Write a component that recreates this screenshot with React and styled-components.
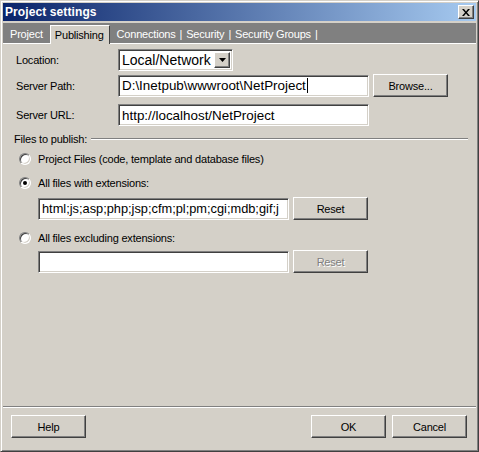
import React from "react";
import styled, { createGlobalStyle, css } from "styled-components";

const Global = createGlobalStyle`
  html, body { margin: 0; padding: 0; background: #d4d0c8; }
  body { font-family: "Liberation Sans", Arial, sans-serif; font-size: 11px; letter-spacing: -0.2px; color: #000; }
  * { box-sizing: border-box; }
`;

const raised = css`
  border: 1px solid;
  border-color: #ffffff #404040 #404040 #ffffff;
  box-shadow: inset -1px -1px #808080, inset 1px 1px #d4d0c8;
`;

const sunken = css`
  border: 1px solid;
  border-color: #808080 #ffffff #ffffff #808080;
  box-shadow: inset 1px 1px #404040, inset -1px -1px #d4d0c8;
`;

const Window = styled.div`
  width: 479px;
  height: 452px;
  background: #d4d0c8;
  border: 1px solid;
  border-color: #d4d0c8 #404040 #404040 #d4d0c8;
  box-shadow: inset 1px 1px #ffffff, inset -1px -1px #808080;
  padding: 2px;
  display: flex;
  flex-direction: column;
`;

const TitleBar = styled.div`
  height: 18px;
  background: linear-gradient(to right, #0a246a, #a6caf0);
  display: flex;
  align-items: center;
  justify-content: space-between;
  padding: 0 2px;
  flex-shrink: 0;
`;

const Title = styled.span`
  color: #fff;
  font-weight: bold;
  font-size: 12px;
  letter-spacing: 0.1px;
`;

const CloseBtn = styled.div`
  width: 16px;
  height: 14px;
  background: #d4d0c8;
  ${raised};
  display: flex;
  align-items: center;
  justify-content: center;
`;

const TabStrip = styled.div`
  margin-top: 1px;
  height: 22px;
  background: #808080;
  border-top: 1px solid #d4d0c8;
  border-bottom: 1px solid #ffffff;
  display: flex;
  align-items: flex-end;
  flex-shrink: 0;
`;

const Tab = styled.div`
  height: 18px;
  display: flex;
  align-items: center;
  padding: 0 ${(p) => p.$pr || 5}px 0 7px;
  color: ${(p) => (p.$active ? "#000" : "#fff")};
  ${(p) =>
    p.$active &&
    css`
      background: #d4d0c8;
      height: 19px;
      margin-bottom: -1px;
      padding: 0 5px 0 4px;
      border-left: 1px solid #fff;
      border-top: 1px solid #fff;
      border-right: 1px solid #404040;
    `}
`;

const Sep = styled.span`
  color: #fff;
  padding: 0 4px;
`;

const Body = styled.div`
  flex: 1;
  display: flex;
  flex-direction: column;
  padding: 5px 8px 0 13px;
`;

const FormRow = styled.div`
  display: flex;
  align-items: center;
  margin-top: ${(p) => p.$mt || 0}px;
`;

const Label = styled.span`
  width: 102px;
`;

const Field = styled.div`
  height: 22px;
  width: ${(p) => p.$w}px;
  background: #fff;
  ${sunken};
  display: flex;
  align-items: center;
  padding: 0 3px;
  font-size: ${(p) => p.$fs || 13.4}px;
  letter-spacing: 0;
  white-space: nowrap;
  overflow: hidden;
`;

const Caret = styled.span`
  display: inline-block;
  width: 1px;
  height: 15px;
  background: #000;
  margin-left: 1px;
`;

const Select = styled(Field)`
  padding: 0 2px 0 3px;
  justify-content: space-between;
  font-size: 14px;
`;

const Arrow = styled.div`
  width: 16px;
  height: 16px;
  background: #d4d0c8;
  ${raised};
  display: flex;
  align-items: center;
  justify-content: center;
`;

const Button = styled.div`
  width: 75px;
  height: 23px;
  background: #d4d0c8;
  ${raised};
  display: flex;
  align-items: center;
  justify-content: center;
  color: ${(p) => (p.$disabled ? "#808080" : "#000")};
  text-shadow: ${(p) => (p.$disabled ? "1px 1px #ffffff" : "none")};
  margin-left: ${(p) => p.$ml || 0}px;
`;

const GroupHead = styled.div`
  display: flex;
  align-items: center;
  height: 14px;
  margin: 6px 0 0 -2px;
  gap: 4px;
`;

const GroupLine = styled.div`
  flex: 1;
  height: 2px;
  border-top: 1px solid #808080;
  border-bottom: 1px solid #fff;
`;

const RadioRow = styled.div`
  display: flex;
  align-items: center;
  height: 14px;
  gap: 7px;
  padding-left: 3px;
  margin-top: ${(p) => p.$mt}px;
`;

const RadioCircle = styled.div`
  width: 12px;
  height: 12px;
  border-radius: 50%;
  background: #fff;
  border: 1px solid;
  border-color: #808080 #ffffff #ffffff #808080;
  box-shadow: inset 1px 1px #404040, inset -1px -1px #d4d0c8;
  display: flex;
  align-items: center;
  justify-content: center;
`;

const Dot = styled.div`
  width: 4px;
  height: 4px;
  border-radius: 50%;
  background: #000;
`;

const ExtRow = styled.div`
  display: flex;
  align-items: center;
  padding-left: 22px;
  margin-top: ${(p) => p.$mt}px;
  gap: 4px;
`;

const Spacer = styled.div`
  flex: 1;
`;

const Footer = styled.div`
  border-top: 1px solid #808080;
  box-shadow: inset 0 1px #ffffff;
  margin: 0 -8px 0 -13px;
  padding: 8px 9px 11px 8px;
  display: flex;
  align-items: center;
`;

const Radio = ({ checked, children, mt }) => (
  <RadioRow $mt={mt}>
    <RadioCircle>{checked && <Dot />}</RadioCircle>
    <span>{children}</span>
  </RadioRow>
);

export default function App() {
  return (
    <>
      <Global />
      <Window>
        <TitleBar>
          <Title>Project settings</Title>
          <CloseBtn>
            <svg width="8" height="7" viewBox="0 0 8 7">
              <path d="M0 0h2l2 2.5L6 0h2L5 3.5 8 7H6L4 4.5 2 7H0l3-3.5z" fill="#000" />
            </svg>
          </CloseBtn>
        </TitleBar>
        <TabStrip>
          <Tab $pr={7}>Project</Tab>
          <Tab $active>Publishing</Tab>
          <Tab>
            Connections<Sep>|</Sep>Security<Sep>|</Sep>Security Groups<Sep>|</Sep>
          </Tab>
        </TabStrip>
        <Body>
          <FormRow>
            <Label>Location:</Label>
            <Select $w={115}>
              <span>Local/Network</span>
              <Arrow>
                <svg width="7" height="4" viewBox="0 0 7 4">
                  <path d="M0 0h7L3.5 4z" fill="#000" />
                </svg>
              </Arrow>
            </Select>
          </FormRow>
          <FormRow $mt={3}>
            <Label>Server Path:</Label>
            <Field $w={251}>
              D:\Inetpub\wwwroot\NetProject<Caret />
            </Field>
            <Button $ml={4}>Browse...</Button>
          </FormRow>
          <FormRow $mt={7}>
            <Label>Server URL:</Label>
            <Field $w={251}>http://localhost/NetProject</Field>
          </FormRow>
          <GroupHead>
            <span>Files to publish:</span>
            <GroupLine />
          </GroupHead>
          <Radio mt={6}>Project Files (code, template and database files)</Radio>
          <Radio mt={10} checked>All files with extensions:</Radio>
          <ExtRow $mt={7}>
            <Field $w={251} $fs={12.8}>html;js;asp;php;jsp;cfm;pl;pm;cgi;mdb;gif;j</Field>
            <Button>Reset</Button>
          </ExtRow>
          <Radio mt={11}>All files excluding extensions:</Radio>
          <ExtRow $mt={5}>
            <Field $w={251} />
            <Button $disabled>Reset</Button>
          </ExtRow>
          <Spacer />
          <Footer>
            <Button>Help</Button>
            <Spacer />
            <Button>OK</Button>
            <Button $ml={6}>Cancel</Button>
          </Footer>
        </Body>
      </Window>
    </>
  );
}
